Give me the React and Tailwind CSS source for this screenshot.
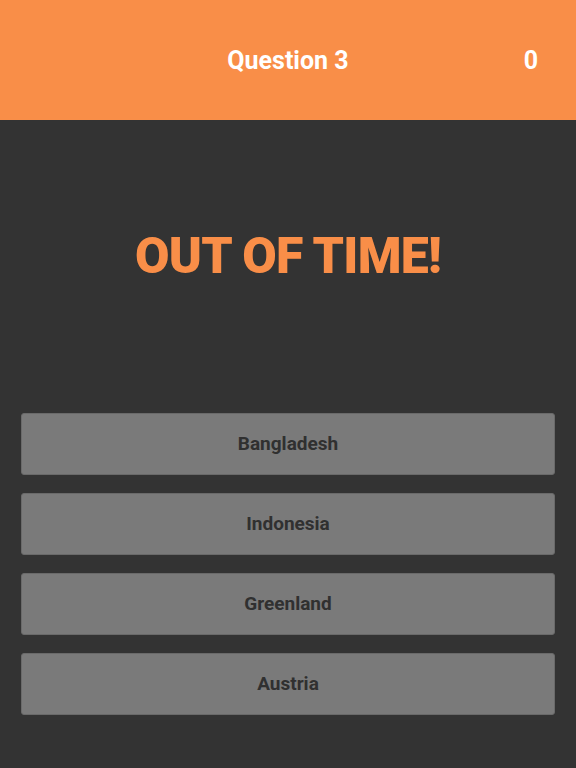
const ANSWERS = ["Bangladesh", "Indonesia", "Greenland", "Austria"];

export default function App() {
  return (
    <div
      className="w-[576px] h-[768px] bg-[#333333] flex flex-col"
      style={{ fontFamily: "Roboto, 'Liberation Sans', sans-serif" }}
    >
      <header className="h-[120px] bg-[#f98e48] grid grid-cols-[1fr_auto_1fr] items-center text-white font-bold text-[25px]">
        <div />
        <div className="leading-none">Question 3</div>
        <div className="justify-self-end pr-[38px] leading-none">0</div>
      </header>

      <div className="h-[293px] flex items-center justify-center pb-[22px]">
        <h1 className="text-[#f98e48] font-black text-[50px] leading-none tracking-[-0.8px]">
          OUT OF TIME!
        </h1>
      </div>

      <div className="flex flex-col gap-[18px] px-[21px]">
        {ANSWERS.map((a) => (
          <button
            key={a}
            type="button"
            className="h-[62px] w-full bg-[#7a7a7a] border border-[#6a6a6a] rounded-[3px] text-[#303030] font-bold text-[19px]"
          >
            {a}
          </button>
        ))}
      </div>
    </div>
  );
}
